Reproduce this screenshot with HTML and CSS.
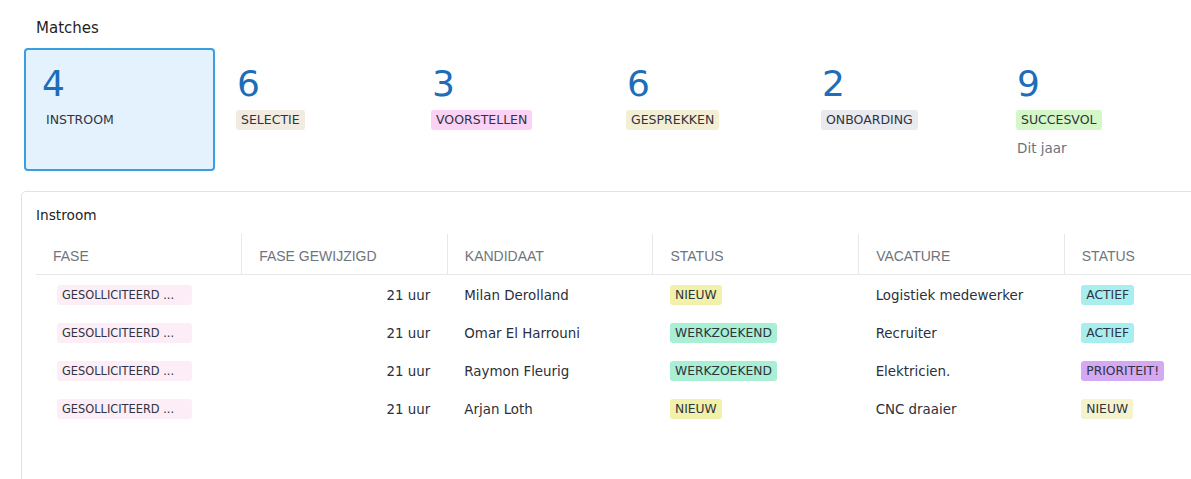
FILE: index.html
```html
<!DOCTYPE html>
<html lang="nl">
<head>
<meta charset="utf-8">
<title>Matches</title>
<link rel="stylesheet" href="styles.css">
</head>
<body>
<div class="page">
  <h2 class="page-title">Matches</h2>
  <div class="stages">
    <div class="stage active">
      <div class="stage-count">4</div>
      <span class="tag tag-plain">INSTROOM</span>
    </div>
    <div class="stage">
      <div class="stage-count">6</div>
      <span class="tag tag-selectie">SELECTIE</span>
    </div>
    <div class="stage">
      <div class="stage-count">3</div>
      <span class="tag tag-voorstellen">VOORSTELLEN</span>
    </div>
    <div class="stage">
      <div class="stage-count">6</div>
      <span class="tag tag-gesprekken">GESPREKKEN</span>
    </div>
    <div class="stage">
      <div class="stage-count">2</div>
      <span class="tag tag-onboarding">ONBOARDING</span>
    </div>
    <div class="stage">
      <div class="stage-count">9</div>
      <span class="tag tag-succesvol">SUCCESVOL</span>
      <div class="stage-note">Dit jaar</div>
    </div>
  </div>

  <section class="panel">
    <h3 class="panel-title">Instroom</h3>
    <table class="grid">
      <thead>
        <tr>
          <th>FASE</th>
          <th>FASE GEWIJZIGD</th>
          <th>KANDIDAAT</th>
          <th>STATUS</th>
          <th>VACATURE</th>
          <th>STATUS</th>
        </tr>
      </thead>
      <tbody>
        <tr>
          <td><span class="tag tag-fase">GESOLLICITEERD ...</span></td>
          <td class="num">21 uur</td>
          <td>Milan Derolland</td>
          <td><span class="tag tag-nieuw">NIEUW</span></td>
          <td>Logistiek medewerker</td>
          <td><span class="tag tag-actief">ACTIEF</span></td>
        </tr>
        <tr>
          <td><span class="tag tag-fase">GESOLLICITEERD ...</span></td>
          <td class="num">21 uur</td>
          <td>Omar El Harrouni</td>
          <td><span class="tag tag-werkzoekend">WERKZOEKEND</span></td>
          <td>Recruiter</td>
          <td><span class="tag tag-actief">ACTIEF</span></td>
        </tr>
        <tr>
          <td><span class="tag tag-fase">GESOLLICITEERD ...</span></td>
          <td class="num">21 uur</td>
          <td>Raymon Fleurig</td>
          <td><span class="tag tag-werkzoekend">WERKZOEKEND</span></td>
          <td>Elektricien.</td>
          <td><span class="tag tag-prioriteit">PRIORITEIT!</span></td>
        </tr>
        <tr>
          <td><span class="tag tag-fase">GESOLLICITEERD ...</span></td>
          <td class="num">21 uur</td>
          <td>Arjan Loth</td>
          <td><span class="tag tag-nieuw">NIEUW</span></td>
          <td>CNC draaier</td>
          <td><span class="tag tag-vac-nieuw">NIEUW</span></td>
        </tr>
      </tbody>
    </table>
  </section>
</div>
</body>
</html>
```

FILE: styles.css
```css
html, body {
  margin: 0;
  padding: 0;
  overflow: hidden;
  background: #ffffff;
}

body {
  font-family: "DejaVu Sans", Verdana, sans-serif;
  color: #2f3440;
}

.page {
  padding-top: 18px;
}

.page-title {
  margin: 0 0 0 36px;
  font-size: 15px;
  font-weight: normal;
  line-height: 20px;
  color: #1f1f1f;
}

.stages {
  display: flex;
  gap: 4px;
  margin: 10px 0 0 24px;
}

.stage {
  flex: 0 0 191px;
  box-sizing: border-box;
  height: 123px;
  padding: 16px 16px 0 16px;
  border: 2px solid transparent;
  border-radius: 4px;
}

.stage.active {
  background: #e3f2fd;
  border-color: #3b9ee2;
}

.stage-count {
  font-size: 36px;
  line-height: 36px;
  color: #1d6db8;
  margin-bottom: 7px;
}

.stage .tag {
  margin-left: -1px;
  font-size: 12.5px;
}

.stage-note {
  margin-top: 9px;
  font-size: 13.5px;
  line-height: 18px;
  color: #6b7280;
}

.tag {
  display: inline-block;
  height: 20px;
  line-height: 20px;
  padding: 0 5px;
  border-radius: 3px;
  font-size: 12.3px;
  color: #2f3440;
  white-space: nowrap;
  vertical-align: middle;
}

.tag-plain { background: transparent; }
.tag-selectie { background: #f2ebe1; }
.tag-voorstellen { background: #fbd1f6; }
.tag-gesprekken { background: #f3efd4; }
.tag-onboarding { background: #e8eaef; }
.tag-succesvol { background: #d3f7c6; }
.tag-fase { background: #fcedf6; font-size: 11.4px; margin-left: 4px; width: 125px; }
.tag-nieuw { background: #f1f1a9; }
.tag-werkzoekend { background: #a8efd4; }
.tag-actief { background: #a9eeee; }
.tag-prioriteit { background: #d4a8f2; }
.tag-vac-nieuw { background: #f5f3cd; }

.panel {
  margin: 20px 0 0 21px;
  width: 1300px;
  height: 320px;
  box-sizing: border-box;
  border: 1px solid #e2e2e2;
  border-radius: 5px;
  padding: 13px 0 0 14px;
}

.panel-title {
  margin: 0 0 9px 0;
  font-size: 13.7px;
  font-weight: normal;
  line-height: 20px;
  color: #1f1f1f;
}

.grid {
  border-collapse: collapse;
  table-layout: fixed;
  width: 1234px;
}

.grid th {
  height: 36px;
  padding: 4px 17px 0;
  text-align: left;
  font-family: "Liberation Sans", Arial, sans-serif;
  font-size: 14px;
  font-weight: normal;
  color: #6f757d;
  border-bottom: 1px solid #e6e6e6;
}

.grid th + th {
  border-left: 1px solid #e8e8e8;
}

.grid td {
  height: 36px;
  padding: 2px 17px 0;
  font-size: 13.4px;
  color: #2b303b;
  white-space: nowrap;
}

.grid td.num {
  text-align: right;
}
```
